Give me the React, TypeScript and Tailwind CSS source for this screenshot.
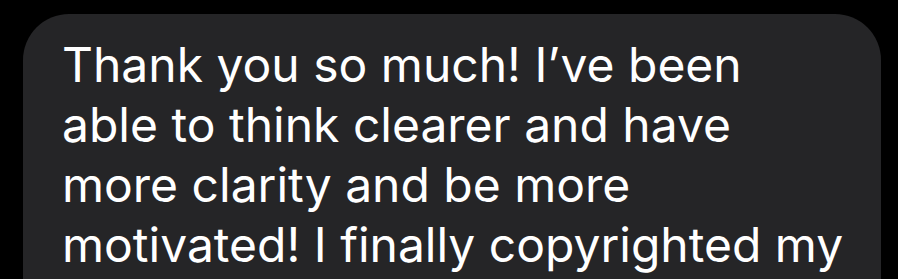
export default function App() {
  const lines = [
    "Thank you so much! I\u2019ve been",
    "able to think clearer and have",
    "more clarity and be more",
    "motivated! I finally copyrighted my",
  ];
  return (
    <div className="w-[898px] h-[279px] overflow-hidden bg-black pt-[14px] pl-[23px] pr-[17px]">
      <div className="w-[858px] h-[320px] rounded-[46px] bg-[#252527] pl-[39px] pt-[21px]">
        <div
          className="text-white text-[48px] leading-[60px] whitespace-nowrap"
          style={{ fontFamily: "Inter, 'Noto Sans', sans-serif" }}
        >
          {lines.map((l) => (
            <div key={l}>{l}</div>
          ))}
        </div>
      </div>
    </div>
  );
}
